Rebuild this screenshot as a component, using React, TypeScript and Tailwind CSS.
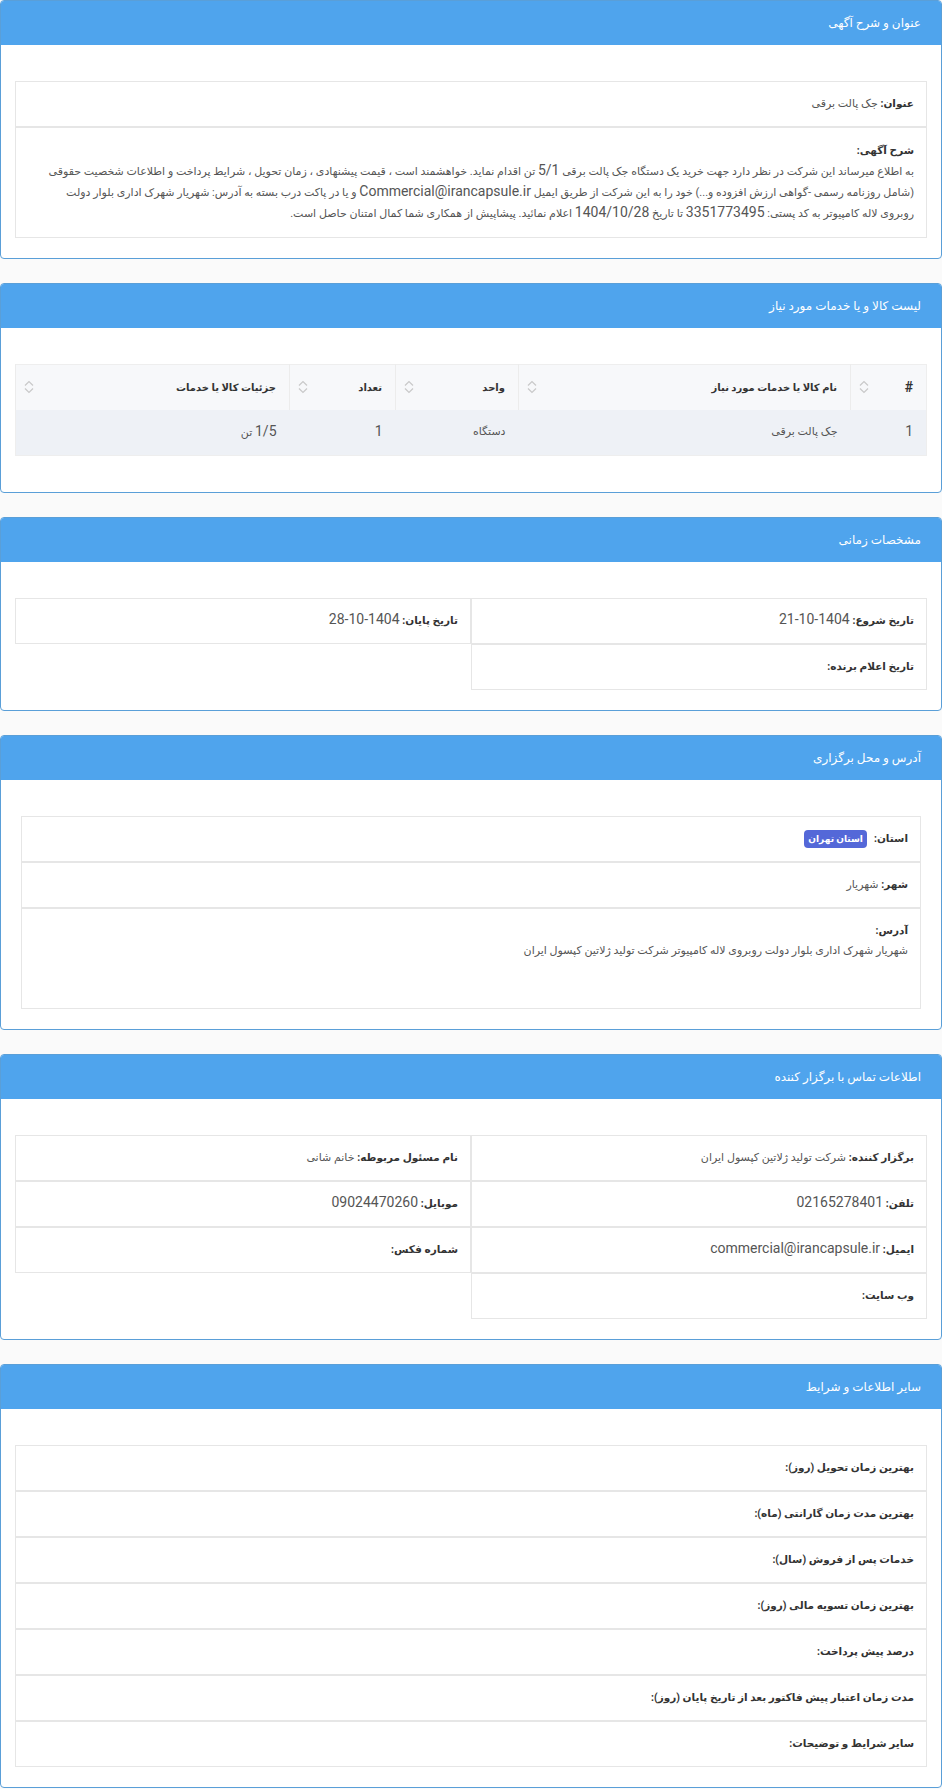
import React from 'react';

const Card: React.FC<{ title: string; children: React.ReactNode; bodyClass?: string }> = ({ title, children, bodyClass = 'px-[14px]' }) => (
  <section className="mb-[24px] rounded-[4px] border border-[#5a9fd8] bg-white overflow-hidden">
    <div className="flex h-[44px] items-center bg-[#4fa4ed] px-5 text-[12px] text-white">{title}</div>
    <div className={`pt-[36px] pb-5 ${bodyClass}`}>{children}</div>
  </section>
);

// Latin runs (numbers, e-mail) keep the larger size
const L: React.FC<{ children: React.ReactNode }> = ({ children }) => <span className="text-[14px] leading-none">{children}</span>;

const Field: React.FC<{ label: string; value?: React.ReactNode; className?: string }> = ({ label, value, className = '' }) => (
  <div className={`border border-[#e6e6e6] px-3 py-3 leading-5 ${className}`}>
    <span className="text-[10.5px] font-bold text-[#333]">{label}</span>
    {value !== undefined && <span className="text-[11px] text-[#555]"> {value}</span>}
  </div>
);

const SortIcon = () => (
  <svg width="12" height="16" viewBox="0 0 12 16" fill="none" stroke="#c9c9c9" strokeWidth="1.2">
    <path d="M2 6.5 L6 2.5 L10 6.5" />
    <path d="M2 9.5 L6 13.5 L10 9.5" />
  </svg>
);

const columns = [
  { label: '#', width: 'w-[76px]' },
  { label: 'نام کالا یا خدمات مورد نیاز', width: 'w-[332px]' },
  { label: 'واحد', width: 'w-[123px]' },
  { label: 'تعداد', width: 'w-[106px]' },
  { label: 'جزئیات کالا یا خدمات', width: 'w-[274px]' },
];

const row: React.ReactNode[] = [
  <L>1</L>,
  'جک پالت برقی',
  'دستگاه',
  <L>1</L>,
  <>
    <L>1/5</L> تن
  </>,
];

const otherInfo = [
  'بهترین زمان تحویل (روز):',
  'بهترین مدت زمان گارانتی (ماه):',
  'خدمات پس از فروش (سال):',
  'بهترین زمان تسویه مالی (روز):',
  'درصد پیش پرداخت:',
  'مدت زمان اعتبار پیش فاکتور بعد از تاریخ پایان (روز):',
  'سایر شرایط و توضیحات:',
];

export default function App() {
  return (
    <div dir="rtl" className="min-h-screen bg-[#fafafa] font-['Roboto','DejaVu_Sans',sans-serif] text-[11px] text-[#555]">
      <Card title="عنوان و شرح آگهی">
        <Field label="عنوان:" value="جک پالت برقی" />
        <div className="border border-[#e6e6e6] px-3 py-[13px] leading-5">
          <div className="text-[10.5px] font-bold text-[#333]">شرح آگهی:</div>
          <p className="text-[11px] leading-[21px] text-[#555]">
            به اطلاع میرساند این شرکت در نظر دارد جهت خرید یک دستگاه جک پالت برقی <L>5/1</L> تن اقدام نماید. خواهشمند است ، قیمت پیشنهادی ، زمان تحویل ، شرایط پرداخت و اطلاعات شخصیت حقوقی
            <br />
            (شامل روزنامه رسمی -گواهی ارزش افزوده و...) خود را به این شرکت از طریق ایمیل <L>Commercial@irancapsule.ir</L> و یا در پاکت درب بسته به آدرس: شهریار شهرک اداری بلوار دولت
            <br />
            روبروی لاله کامپیوتر به کد پستی: <L>3351773495</L> تا تاریخ <L>1404/10/28</L> اعلام نمائید. پیشاپیش از همکاری شما کمال امتنان حاصل است.
          </p>
        </div>
      </Card>

      <Card title="لیست کالا و یا خدمات مورد نیاز">
        <table className="mb-4 w-full border-collapse border border-[#eeeeee]">
          <thead>
            <tr className="h-[45px] bg-[#f7f8fa]">
              {columns.map((c) => (
                <th key={c.label} className={`${c.width} border-l border-[#ececec] pr-[13px] pl-[7px] text-right text-[10px] font-bold text-[#333]`}>
                  <div className="flex items-center justify-between">
                    <span className={c.label === '#' ? 'text-[14px]' : ''}>{c.label}</span>
                    <SortIcon />
                  </div>
                </th>
              ))}
            </tr>
          </thead>
          <tbody>
            <tr className="h-[46px] bg-[#eef1f6]">
              {row.map((v, i) => (
                <td key={i} className="pr-[13px] text-right text-[11px] text-[#555]">
                  {v}
                </td>
              ))}
            </tr>
          </tbody>
        </table>
      </Card>

      <Card title="مشخصات زمانی">
        <div className="grid grid-cols-2">
          <Field label="تاریخ شروع:" value={<L>1404-10-21</L>} />
          <Field label="تاریخ پایان:" value={<L>1404-10-28</L>} />
          <Field label="تاریخ اعلام برنده:" />
        </div>
      </Card>

      <Card title="آدرس و محل برگزاری" bodyClass="px-5">
        <div className="flex items-center border border-[#e6e6e6] px-3 py-3 leading-5">
          <span className="text-[10.5px] font-bold text-[#333]">استان:</span>
          <span className="mr-[7px] rounded-[4px] bg-[#5468d8] px-[4px] text-[9px] font-bold leading-[18px] text-white">استان تهران</span>
        </div>
        <Field label="شهر:" value="شهریار" />
        <div className="min-h-[101px] border border-[#e6e6e6] px-3 py-3 leading-5">
          <div className="text-[10.5px] font-bold text-[#333]">آدرس:</div>
          <div className="text-[11px] text-[#555]">شهریار شهرک اداری بلوار دولت روبروی لاله کامپیوتر شرکت تولید ژلاتین کپسول ایران</div>
        </div>
      </Card>

      <Card title="اطلاعات تماس با برگزار کننده">
        <div className="grid grid-cols-2">
          <Field label="برگزار کننده:" value="شرکت تولید ژلاتین کپسول ایران" />
          <Field label="نام مسئول مربوطه:" value="خانم شانی" />
          <Field label="تلفن:" value={<L>02165278401</L>} />
          <Field label="موبایل:" value={<L>09024470260</L>} />
          <Field label="ایمیل:" value={<L>commercial@irancapsule.ir</L>} />
          <Field label="شماره فکس:" />
          <Field label="وب سایت:" />
        </div>
      </Card>

      <Card title="سایر اطلاعات و شرایط">
        {otherInfo.map((l) => (
          <Field key={l} label={l} />
        ))}
      </Card>
    </div>
  );
}
